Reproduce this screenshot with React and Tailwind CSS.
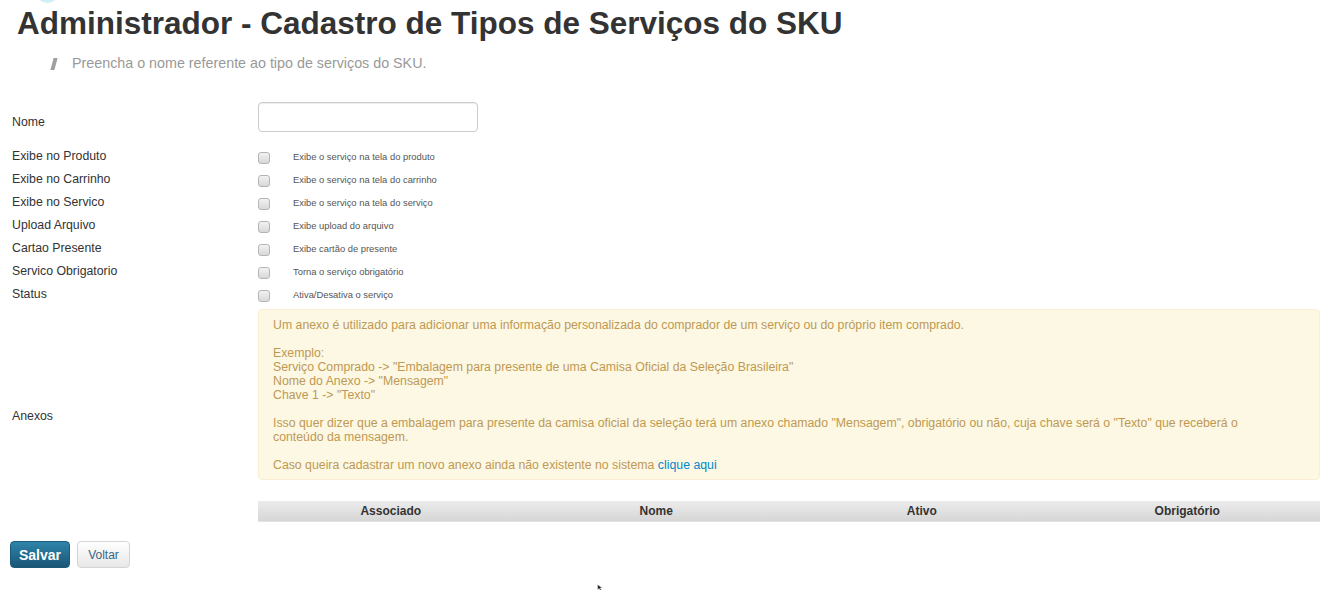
import React from "react";

const rows = [
  ["Exibe no Produto", "Exibe o serviço na tela do produto"],
  ["Exibe no Carrinho", "Exibe o serviço na tela do carrinho"],
  ["Exibe no Servico", "Exibe o serviço na tela do serviço"],
  ["Upload Arquivo", "Exibe upload do arquivo"],
  ["Cartao Presente", "Exibe cartão de presente"],
  ["Servico Obrigatorio", "Torna o serviço obrigatório"],
  ["Status", "Ativa/Desativa o serviço"],
];

export default function App() {
  return (
    <div
      className="relative w-[1328px] h-[590px] bg-white overflow-hidden text-[#333]"
      style={{ fontFamily: '"Liberation Sans", Arial, sans-serif' }}
    >
      <div className="absolute left-[36px] top-[-21px] w-[23px] h-[24px] rounded-full bg-[#d3ecf5]" />

      <h1 className="pt-[5px] pl-[17px] text-[31.5px] leading-[36px] font-bold text-[#333]">
        Administrador - Cadastro de Tipos de Serviços do SKU
      </h1>

      <div className="mt-[12px] pl-[52px] flex items-center h-[20px]">
        <span className="w-[4px] h-[12px] bg-[#a0a0a0] -skew-x-[15deg] mr-[16px] mt-[2px]" />
        <span className="text-[14.3px] leading-[20px] text-[#999]">
          Preencha o nome referente ao tipo de serviços do SKU.
        </span>
      </div>

      <div className="pl-[12px] mt-[29px]">
        <div className="flex h-[30px]">
          <div className="w-[246px] pt-[10px] text-[12.3px] leading-[20px]">Nome</div>
          <input
            type="text"
            className="w-[220px] h-[30px] border border-[#ccc] rounded-[4px] bg-white shadow-[inset_0_1px_1px_rgba(0,0,0,0.075)]"
          />
        </div>

        <div className="mt-[13px] flex flex-col">
          {rows.map(([label, desc]) => (
            <div key={label} className="flex items-center h-[23px]">
              <div className="w-[246px] text-[12.3px] leading-[16px] -mt-[2px]">{label}</div>
              <span className="w-[12px] h-[12px] mt-[3px] rounded-[3px] border border-[#b5b5b5] bg-gradient-to-b from-[#f2f2f2] to-[#d8d8d8]" />
              <span className="ml-[23px] text-[9.4px] leading-[14px] text-[#555]">{desc}</span>
            </div>
          ))}
        </div>

        <div className="mt-[3px] flex items-center">
          <div className="w-[246px] text-[12.3px] leading-[16px]">Anexos</div>
          <div className="w-[1062px] flex flex-col">
            <div className="bg-[#fcf8e3] border border-[#fbeed5] rounded-[4px] pt-[8px] pb-[7px] pl-[14px] pr-[35px] text-[12.3px] leading-[14px] text-[#c09853] whitespace-nowrap">
              Um anexo é utilizado para adicionar uma informação personalizada do comprador de um serviço ou do próprio item comprado.
              <br />
              <br />
              Exemplo:
              <br />
              Serviço Comprado -&gt; "Embalagem para presente de uma Camisa Oficial da Seleção Brasileira"
              <br />
              Nome do Anexo -&gt; "Mensagem"
              <br />
              Chave 1 -&gt; "Texto"
              <br />
              <br />
              Isso quer dizer que a embalagem para presente da camisa oficial da seleção terá um anexo chamado "Mensagem", obrigatório ou não, cuja chave será o "Texto" que receberá o
              <br />
              conteúdo da mensagem.
              <br />
              <br />
              Caso queira cadastrar um novo anexo ainda não existente no sistema{" "}
              <span className="text-[#0088cc]">clique aqui</span>
            </div>
            <div className="mt-[21px] h-[21px] grid grid-cols-4 bg-gradient-to-b from-[#ececec] to-[#d6d6d6] border-b border-[#e4e4e4] text-[12px] font-bold leading-[20px] text-[#333]">
              <div className="text-center">Associado</div>
              <div className="text-center">Nome</div>
              <div className="text-center">Ativo</div>
              <div className="text-center">Obrigatório</div>
            </div>
          </div>
        </div>
      </div>

      <div className="mt-[19px] pl-[10px] flex gap-[7px]">
        <button className="w-[60px] h-[27px] rounded-[4px] border border-[#1b5a79] bg-gradient-to-b from-[#2f84ab] to-[#1a5676] text-white text-[14px] font-bold leading-[20px]">
          Salvar
        </button>
        <button className="w-[53px] h-[27px] rounded-[4px] border border-[#d5d5d5] bg-gradient-to-b from-white to-[#e8e8e8] text-[#3a6685] text-[12px] leading-[20px]">
          Voltar
        </button>
      </div>

      <svg className="absolute left-[597px] top-[584px]" width="8" height="8" viewBox="0 0 8 8">
        <path d="M0.5 0.5 L0.5 6 L2 4.5 L4 7.5 L5 7 L3.2 4 L5.5 4 Z" fill="#222" stroke="#fff" strokeWidth="0.5" />
      </svg>
    </div>
  );
}
